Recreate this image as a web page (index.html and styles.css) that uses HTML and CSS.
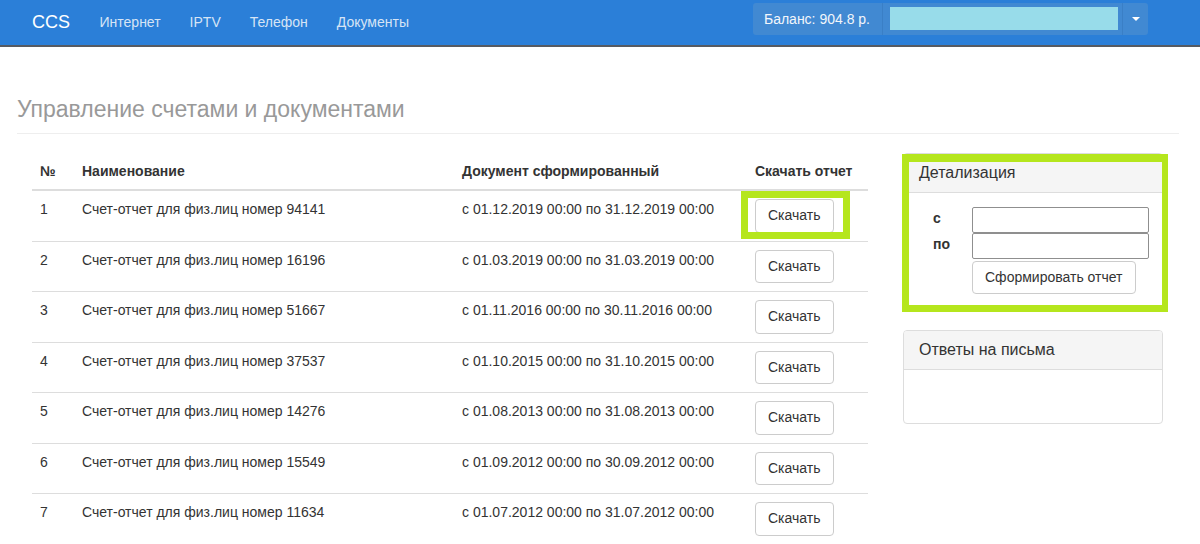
FILE: index.html
```html
<!DOCTYPE html>
<html lang="ru">
<head>
<meta charset="utf-8">
<title>Управление счетами и документами</title>
<link rel="stylesheet" href="styles.css">
</head>
<body>
<nav class="navbar">
  <a class="brand" href="#">CCS</a>
  <ul class="nav">
    <li><a href="#">Интернет</a></li>
    <li><a href="#">IPTV</a></li>
    <li><a href="#">Телефон</a></li>
    <li><a href="#">Документы</a></li>
  </ul>
  <div class="account">
    <span class="balance">Баланс: 904.8 р.</span>
    <span class="acc-field"><span class="acc-name"></span></span>
    <span class="acc-caret"><span class="caret"></span></span>
  </div>
</nav>

<main class="page">
  <h1 class="page-header">Управление счетами и документами</h1>
  <div class="content">
    <table class="docs">
      <thead>
        <tr>
          <th class="c-num">№</th>
          <th class="c-name">Наименование</th>
          <th class="c-doc">Документ сформированный</th>
          <th class="c-dl">Скачать отчет</th>
        </tr>
      </thead>
      <tbody>
        <tr>
          <td>1</td><td>Счет-отчет для физ.лиц номер 94141</td><td>с 01.12.2019 00:00 по 31.12.2019 00:00</td>
          <td><div class="btn-wrap"><button class="btn">Скачать</button><span class="mark mark-btn"></span></div></td>
        </tr>
        <tr>
          <td>2</td><td>Счет-отчет для физ.лиц номер 16196</td><td>с 01.03.2019 00:00 по 31.03.2019 00:00</td>
          <td><div class="btn-wrap"><button class="btn">Скачать</button></div></td>
        </tr>
        <tr>
          <td>3</td><td>Счет-отчет для физ.лиц номер 51667</td><td>с 01.11.2016 00:00 по 30.11.2016 00:00</td>
          <td><div class="btn-wrap"><button class="btn">Скачать</button></div></td>
        </tr>
        <tr>
          <td>4</td><td>Счет-отчет для физ.лиц номер 37537</td><td>с 01.10.2015 00:00 по 31.10.2015 00:00</td>
          <td><div class="btn-wrap"><button class="btn">Скачать</button></div></td>
        </tr>
        <tr>
          <td>5</td><td>Счет-отчет для физ.лиц номер 14276</td><td>с 01.08.2013 00:00 по 31.08.2013 00:00</td>
          <td><div class="btn-wrap"><button class="btn">Скачать</button></div></td>
        </tr>
        <tr>
          <td>6</td><td>Счет-отчет для физ.лиц номер 15549</td><td>с 01.09.2012 00:00 по 30.09.2012 00:00</td>
          <td><div class="btn-wrap"><button class="btn">Скачать</button></div></td>
        </tr>
        <tr>
          <td>7</td><td>Счет-отчет для физ.лиц номер 11634</td><td>с 01.07.2012 00:00 по 31.07.2012 00:00</td>
          <td><div class="btn-wrap"><button class="btn">Скачать</button></div></td>
        </tr>
      </tbody>
    </table>

    <aside class="side">
      <section class="panel panel-marked">
        <div class="panel-heading">Детализация</div>
        <div class="panel-body">
          <form class="period">
            <label class="lbl">с</label><input class="inp" type="text">
            <label class="lbl">по</label><input class="inp" type="text">
            <span></span><button class="btn btn-form" type="button">Сформировать отчет</button>
          </form>
        </div>
        <span class="mark mark-panel"></span>
      </section>
      <section class="panel">
        <div class="panel-heading">Ответы на письма</div>
        <div class="panel-body panel-empty"></div>
      </section>
    </aside>
  </div>
</main>
</body>
</html>
```

FILE: styles.css
```css
* { box-sizing: border-box; }

body {
  margin: 0;
  font-family: "Liberation Sans", Arial, sans-serif;
  font-size: 14px;
  line-height: 20px;
  color: #333;
  background: #fff;
}

/* navbar */
.navbar {
  display: flex;
  align-items: center;
  height: 47px;
  padding-left: 17px;
  background: #2b7fd8;
  border-bottom: 2px solid #565b62;
}
.brand {
  padding: 0 15px;
  font-size: 18px;
  color: #fff;
  text-decoration: none;
  line-height: 20px;
  margin-top: -2px;
}
.nav {
  display: flex;
  list-style: none;
  margin: 0;
  padding: 0;
}
.nav a {
  display: block;
  padding: 0 14.5px;
  color: #d6e4f5;
  text-decoration: none;
  line-height: 20px;
  margin-top: -2px;
}
.account {
  display: flex;
  align-items: stretch;
  margin-left: auto;
  margin-right: 52px;
  margin-top: -8px;
  height: 32px;
  background: #4189d2;
  border-radius: 3px;
}
.balance {
  display: flex;
  align-items: center;
  padding: 0 12px 0 11px;
  white-space: nowrap;
  color: #f2f6fb;
  border-right: 1px solid #3a7fc6;
}
.acc-field {
  display: flex;
  align-items: center;
  padding: 0 4px 0 7px;
  border-right: 1px solid #3a7fc6;
}
.acc-name {
  display: block;
  width: 228px;
  height: 23px;
  background: #98dcea;
}
.acc-caret {
  display: flex;
  align-items: center;
  justify-content: center;
  width: 25px;
}
.caret {
  width: 0;
  height: 0;
  border-top: 4px solid #fff;
  border-left: 4px solid transparent;
  border-right: 4px solid transparent;
}

/* page */
.page {
  padding: 0 21px 0 17px;
}
.page-header {
  margin: 49px 0 0;
  padding-bottom: 11px;
  font-size: 23px;
  line-height: 26px;
  font-weight: normal;
  color: #999;
  border-bottom: 1px solid #eee;
}
.content {
  display: flex;
  align-items: flex-start;
  padding-left: 15px;
  margin-top: 19px;
}

/* table */
.docs {
  width: 836px;
  border-collapse: collapse;
  border-spacing: 0;
}
.docs th {
  padding: 8px;
  text-align: left;
  font-weight: bold;
  border-bottom: 2px solid #ddd;
  vertical-align: bottom;
}
.docs td {
  padding: 8px;
  border-top: 1px solid #ddd;
  vertical-align: top;
}
.docs tbody tr:first-child td { border-top: 0; }
.c-num { width: 42px; }
.c-name { width: 380px; }
.c-doc { width: 293px; }
.c-dl { width: 121px; }

.btn-wrap {
  position: relative;
  width: 78px;
}
.btn {
  display: inline-block;
  padding: 6px 12px;
  font-family: inherit;
  font-size: 14px;
  line-height: 19.5px;
  color: #333;
  background: #fff;
  border: 1px solid #ccc;
  border-radius: 4px;
  cursor: pointer;
}
.mark {
  position: absolute;
  border: 7px solid #b5e61d;
  pointer-events: none;
}
.mark-btn {
  left: -14px;
  top: -8px;
  width: 109px;
  height: 48px;
}

/* side panels */
.side {
  width: 260px;
  margin-left: 35px;
}
.panel {
  position: relative;
  margin-bottom: 20px;
  border: 1px solid #ddd;
  border-radius: 4px;
  background: #fff;
}
.panel-heading {
  padding: 10px 15px;
  font-size: 16px;
  line-height: 18px;
  color: #333;
  background: #f5f5f5;
  border-bottom: 1px solid #ddd;
  border-radius: 3px 3px 0 0;
}
.panel-body {
  padding: 14px 15px 15px 29px;
}
.panel-empty {
  height: 53px;
}
.period {
  display: grid;
  grid-template-columns: 39px 177px;
  row-gap: 0;
  margin: 0;
}
.lbl {
  font-weight: bold;
  align-self: center;
  margin-top: -4px;
}
.inp {
  height: 26px;
  margin: 0;
  border: 1px solid #8f8f8f;
  border-radius: 2px;
  font-family: inherit;
  font-size: 14px;
}
.btn-form {
  justify-self: start;
  margin-top: 2px;
  padding: 6px 12px 5px;
}
.mark-panel {
  left: -2px;
  top: 0;
  width: 266px;
  height: 158px;
  border-width: 8px 6px 7px 7px;
}
```
